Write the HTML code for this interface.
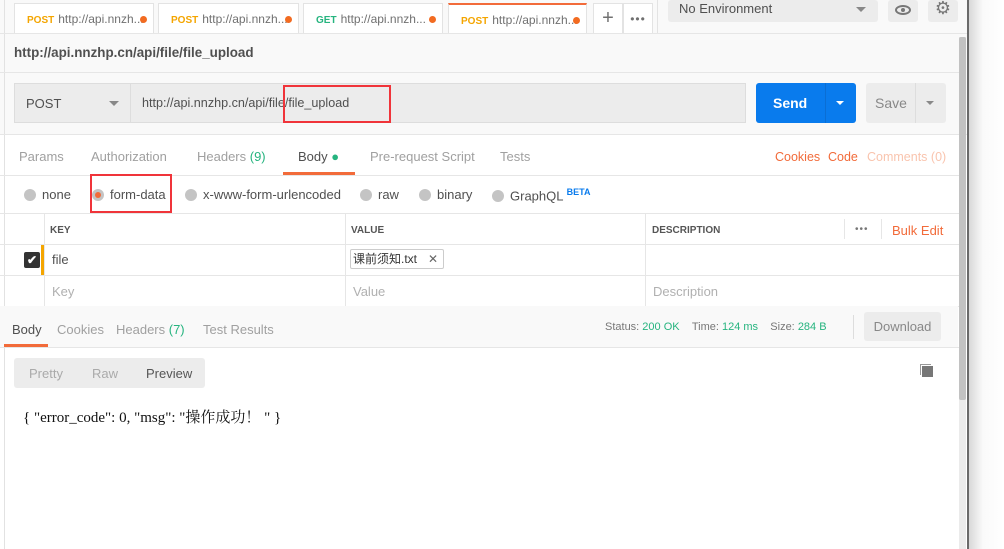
<!DOCTYPE html>
<html><head><meta charset="utf-8"><style>
*{box-sizing:border-box;margin:0;padding:0}
body{width:1004px;height:549px;overflow:hidden;background:#fff;font-family:"Liberation Sans","Noto Sans CJK SC",sans-serif;font-size:13px;color:#505050;position:relative}
.a{position:absolute}
.tab{position:absolute;top:3px;height:31px;background:#fff;border:1px solid #e3e3e3;border-bottom:none;font-size:12px;line-height:30px;padding-left:12px;color:#707070;white-space:nowrap}
.tab b{font-size:10px;margin-right:4px}
.dot{position:absolute;right:6px;top:12px;width:7px;height:7px;border-radius:50%;background:#f26b21}
.gbtn{background:#ececec;border-radius:3px}
.radio{display:inline-block;width:12px;height:12px;border-radius:50%;background:#c4c4c4;vertical-align:-2px;margin-right:6px}
.hl{position:absolute;left:0;right:0;height:1px;background:#e6e6e6}
.vl{position:absolute;width:1px;background:#e6e6e6}
.gray{color:#a0a0a0}
</style></head><body>
<div class="a" style="left:0;top:0;width:968px;height:549px;background:#fff"></div>
<div class="a" style="left:0;top:0;width:968px;height:134px;background:#f9f9f9"></div>
<div class="a" style="left:4px;top:0;width:1px;height:549px;background:#e2e2e2"></div>
<div class="tab" style="left:14px;width:140px"><b style="color:#f4a500">POST</b>http://api.nnzh...<span class="dot"></span></div>
<div class="tab" style="left:158px;width:141px"><b style="color:#f4a500">POST</b>http://api.nnzh...<span class="dot"></span></div>
<div class="tab" style="left:303px;width:140px"><b style="color:#26b47f">GET</b>http://api.nnzh...<span class="dot"></span></div>
<div class="tab" style="left:448px;width:139px;border-top:2px solid #f26b3a"><b style="color:#f4a500">POST</b>http://api.nnzh...<span class="dot"></span></div>
<div class="tab" style="left:593px;width:30px;padding:0;text-align:center;font-size:20px;line-height:28px">+</div>
<div class="tab" style="left:623px;width:30px;padding:0;text-align:center;font-size:12px;letter-spacing:1px">•••</div>
<div class="a" style="left:657px;top:0;width:1px;height:33px;background:#e3e3e3"></div>
<div class="a gbtn" style="left:668px;top:0;width:210px;height:22px;padding-left:11px;font-size:13px;line-height:18px">No Environment<span class="a" style="right:12px;top:7px;border:5px solid transparent;border-top-color:#888"></span></div>
<div class="a gbtn" style="left:888px;top:0;width:30px;height:22px"><span class="a" style="left:7px;top:5px;width:16px;height:10px;border:2px solid #777;border-radius:50%"></span><span class="a" style="left:13px;top:8px;width:4px;height:4px;background:#777;border-radius:50%"></span></div>
<div class="a gbtn" style="left:928px;top:0;width:30px;height:22px;text-align:center;color:#777;font-size:18px;line-height:16px">⚙</div>
<div class="hl" style="top:33px;right:36px"></div>
<div class="a" style="left:14px;top:45px;font-size:13.4px;font-weight:bold;color:#505050">http://api.nnzhp.cn/api/file/file_upload</div>
<div class="hl" style="top:72px;right:44px"></div>
<div class="a" style="left:14px;top:83px;width:732px;height:40px;background:#ececec;border:1px solid #ddd"></div>
<div class="a" style="left:130px;top:83px;width:1px;height:40px;background:#ddd"></div>
<div class="a" style="left:26px;top:96px;font-size:13px">POST</div>
<div class="a" style="left:109px;top:101px;border:5px solid transparent;border-top-color:#888"></div>
<div class="a" style="left:142px;top:96px;font-size:12.6px">http://api.nnzhp.cn/api/file/file_upload</div>
<div class="a" style="left:283px;top:85px;width:108px;height:38px;border:2px solid #f0343a"></div>
<div class="a" style="left:756px;top:83px;width:100px;height:40px;background:#097bed;border-radius:3px"></div>
<div class="a" style="left:825px;top:83px;width:1px;height:40px;background:#0a6ed4"></div>
<div class="a" style="left:773px;top:95px;color:#fff;font-weight:bold;font-size:14px">Send</div>
<div class="a" style="left:836px;top:101px;border:4px solid transparent;border-top-color:#fff"></div>
<div class="a gbtn" style="left:866px;top:83px;width:80px;height:40px"></div>
<div class="a" style="left:915px;top:83px;width:1px;height:40px;background:#ddd"></div>
<div class="a" style="left:875px;top:95px;color:#888;font-size:14px">Save</div>
<div class="a" style="left:926px;top:101px;border:4px solid transparent;border-top-color:#888"></div>
<div class="hl" style="top:134px;right:36px"></div>
<div class="a gray" style="left:19px;top:149px">Params</div>
<div class="a gray" style="left:91px;top:149px">Authorization</div>
<div class="a gray" style="left:197px;top:149px">Headers <span style="color:#26b47f">(9)</span></div>
<div class="a" style="left:298px;top:149px">Body <span style="color:#26b47f">●</span></div>
<div class="a gray" style="left:370px;top:149px">Pre-request Script</div>
<div class="a gray" style="left:500px;top:149px">Tests</div>
<div class="a" style="left:775px;top:150px;color:#f26b3a;font-size:12.5px">Cookies</div>
<div class="a" style="left:828px;top:150px;color:#f26b3a;font-size:12.5px">Code</div>
<div class="a" style="left:867px;top:150px;color:#f9c4ae;font-size:12.5px">Comments (0)</div>
<div class="a" style="left:283px;top:172px;width:72px;height:3px;background:#f26b3a"></div>
<div class="hl" style="top:175px;right:44px"></div>
<div class="a" style="left:24px;top:187px;font-size:13px;white-space:nowrap">
<span class="radio"></span>none</div>
<div class="a" style="left:92px;top:187px"><span class="radio" style="background:#c4c4c4;position:relative"><span class="a" style="left:3px;top:3px;width:6px;height:6px;border-radius:50%;background:#f26b3a"></span></span>form-data</div>
<div class="a" style="left:185px;top:187px"><span class="radio"></span>x-www-form-urlencoded</div>
<div class="a" style="left:360px;top:187px"><span class="radio"></span>raw</div>
<div class="a" style="left:419px;top:187px"><span class="radio"></span>binary</div>
<div class="a" style="left:492px;top:187px"><span class="radio"></span>GraphQL <sup style="color:#097bed;font-size:9px;font-weight:bold">BETA</sup></div>
<div class="a" style="left:90px;top:174px;width:82px;height:39px;border:2px solid #f0343a"></div>
<div class="hl" style="top:213px;right:44px"></div>
<div class="hl" style="top:244px;right:44px"></div>
<div class="hl" style="top:275px;right:44px"></div>
<div class="hl" style="top:306px;right:44px"></div>
<div class="vl" style="left:44px;top:213px;height:93px"></div>
<div class="vl" style="left:345px;top:213px;height:93px"></div>
<div class="vl" style="left:645px;top:213px;height:93px"></div>
<div class="vl" style="left:844px;top:219px;height:20px"></div>
<div class="vl" style="left:881px;top:219px;height:20px"></div>
<div class="a" style="left:50px;top:225px;font-size:10px;font-weight:bold;color:#555">KEY</div>
<div class="a" style="left:351px;top:225px;font-size:10px;font-weight:bold;color:#555">VALUE</div>
<div class="a" style="left:652px;top:225px;font-size:10px;font-weight:bold;color:#555">DESCRIPTION</div>
<div class="a" style="left:855px;top:224px;font-size:10px;color:#777;letter-spacing:1px">•••</div>
<div class="a" style="left:892px;top:223px;color:#f26b3a">Bulk Edit</div>
<div class="a" style="left:41px;top:245px;width:3px;height:30px;background:#f4a500"></div>
<div class="a" style="left:24px;top:252px;width:16px;height:16px;background:#333;border-radius:2px;color:#fff;font-size:12px;text-align:center;line-height:16px;font-weight:bold">✔</div>
<div class="a" style="left:52px;top:252px">file</div>
<div class="a" style="left:350px;top:249px;width:94px;height:20px;border:1px solid #ccc;border-radius:2px;padding-left:2px;line-height:18px;font-size:12px;color:#333;white-space:nowrap">课前须知.txt <span style="position:absolute;right:5px;color:#666">✕</span></div>
<div class="a gray" style="left:52px;top:284px;color:#b0b0b0">Key</div>
<div class="a gray" style="left:353px;top:284px;color:#b0b0b0">Value</div>
<div class="a gray" style="left:653px;top:284px;color:#b0b0b0">Description</div>
<div class="a" style="left:0;top:306px;width:958px;height:41px;background:#f9f9f9"></div>
<div class="a" style="left:12px;top:322px">Body</div>
<div class="a gray" style="left:57px;top:322px">Cookies</div>
<div class="a gray" style="left:116px;top:322px">Headers <span style="color:#26b47f">(7)</span></div>
<div class="a gray" style="left:203px;top:322px">Test Results</div>
<div class="a" style="left:4px;top:344px;width:44px;height:3px;background:#f26b3a"></div>
<div class="a" style="left:605px;top:321px;font-size:11px;color:#777">Status: <span style="color:#26b47f">200 OK</span>&nbsp;&nbsp;&nbsp;&nbsp;Time: <span style="color:#26b47f">124 ms</span>&nbsp;&nbsp;&nbsp;&nbsp;Size: <span style="color:#26b47f">284 B</span></div>
<div class="a" style="left:853px;top:315px;width:1px;height:24px;background:#ddd"></div>
<div class="a gbtn" style="left:864px;top:312px;width:77px;height:29px;color:#888;line-height:29px;text-align:center">Download</div>
<div class="hl" style="top:347px;right:44px"></div>
<div class="a gbtn" style="left:14px;top:358px;width:191px;height:30px"></div>
<div class="a" style="left:29px;top:366px;color:#aaa">Pretty</div>
<div class="a" style="left:92px;top:366px;color:#aaa">Raw</div>
<div class="a" style="left:146px;top:366px;color:#555">Preview</div>
<div class="a" style="left:922px;top:366px;width:11px;height:11px;background:#777"></div>
<div class="a" style="left:920px;top:364px;width:11px;height:11px;border:1px solid #999;border-right:none;border-bottom:none"></div>
<div class="a" style="left:23px;top:406px;font-family:'Liberation Serif','Noto Serif CJK SC',serif;font-size:15px;color:#111">{ "error_code": 0, "msg": "操作成功！ " }</div>
<div class="a" style="left:959px;top:37px;width:7px;height:512px;background:#ebebeb"></div>
<div class="a" style="left:959px;top:37px;width:7px;height:363px;background:#c2c2c2;border-radius:2px"></div>
<div class="a" style="left:967px;top:0;width:2px;height:549px;background:#6a6a6a"></div>
<div class="a" style="left:969px;top:0;width:35px;height:549px;background:linear-gradient(to right,#d8d8d8,#fafafa 40%,#fff)"></div>
</body></html>
